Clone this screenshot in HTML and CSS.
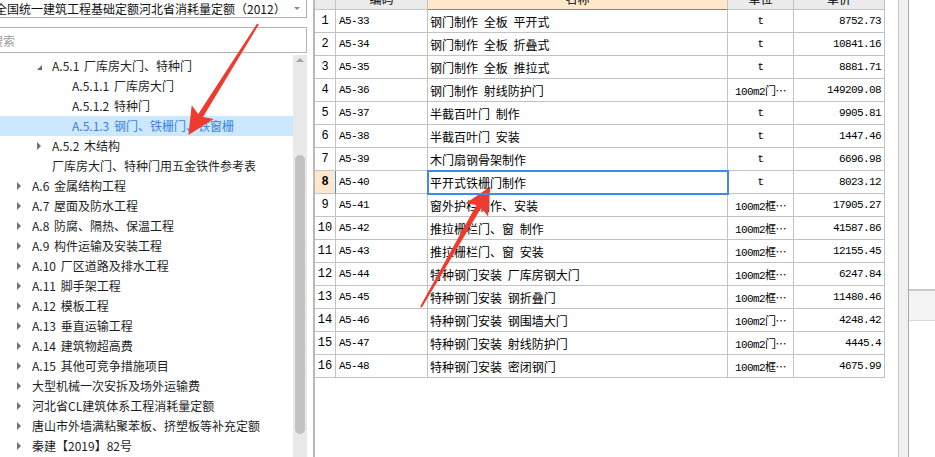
FILE: index.html
```html
<!DOCTYPE html>
<html lang="zh-CN">
<head>
    <meta charset="UTF-8">
    <meta name="viewport" content="width=device-width, initial-scale=1.0">
    <title>定额库</title>
    <link rel="stylesheet" href="styles.css">
</head>
<body>
    <div class="app">
        <aside class="lib">
            <div class="combo">
                <span class="combo-text">全国统一建筑工程基础定额河北省消耗量定额（2012）</span>
                <span class="caret"></span>
            </div>
            <input class="search" type="text" placeholder="搜索">
            <div class="tree">
                <ul class="nodes">
                    <li class="node lv2"><i class="tog open"></i>A.5.1 厂库房大门、特种门</li>
                    <li class="node lv3"><i class="tog"></i>A.5.1.1 厂库房大门</li>
                    <li class="node lv3"><i class="tog"></i>A.5.1.2 特种门</li>
                    <li class="node lv3 selected"><i class="tog"></i>A.5.1.3 钢门、铁栅门、铁窗栅</li>
                    <li class="node lv2"><i class="tog shut"></i>A.5.2 木结构</li>
                    <li class="node lv2"><i class="tog"></i>厂库房大门、特种门用五金铁件参考表</li>
                    <li class="node lv1"><i class="tog shut"></i>A.6 金属结构工程</li>
                    <li class="node lv1"><i class="tog shut"></i>A.7 屋面及防水工程</li>
                    <li class="node lv1"><i class="tog shut"></i>A.8 防腐、隔热、保温工程</li>
                    <li class="node lv1"><i class="tog shut"></i>A.9 构件运输及安装工程</li>
                    <li class="node lv1"><i class="tog shut"></i>A.10 厂区道路及排水工程</li>
                    <li class="node lv1"><i class="tog shut"></i>A.11 脚手架工程</li>
                    <li class="node lv1"><i class="tog shut"></i>A.12 模板工程</li>
                    <li class="node lv1"><i class="tog shut"></i>A.13 垂直运输工程</li>
                    <li class="node lv1"><i class="tog shut"></i>A.14 建筑物超高费</li>
                    <li class="node lv1"><i class="tog shut"></i>A.15 其他可竞争措施项目</li>
                    <li class="node lv1"><i class="tog shut"></i>大型机械一次安拆及场外运输费</li>
                    <li class="node lv1"><i class="tog shut"></i>河北省CL建筑体系工程消耗量定额</li>
                    <li class="node lv1"><i class="tog shut"></i>唐山市外墙满粘聚苯板、挤塑板等补充定额</li>
                    <li class="node lv1"><i class="tog shut"></i>秦建【2019】82号</li>
                </ul>
                <div class="vscroll">
                    <span class="up"></span>
                    <span class="thumb"></span>
                </div>
            </div>
        </aside>

        <main class="grid">
            <div class="sheet">
                <div class="hd"></div><div class="hd">编码</div><div class="hd hd-on">名称</div><div class="hd">单位</div><div class="hd">单价</div>

                <div class="no">1</div><div class="code">A5-33</div><div class="name">钢门制作 全板 平开式</div><div class="unit">t</div><div class="price">8752.73</div>
                <div class="no">2</div><div class="code">A5-34</div><div class="name">钢门制作 全板 折叠式</div><div class="unit">t</div><div class="price">10841.16</div>
                <div class="no">3</div><div class="code">A5-35</div><div class="name">钢门制作 全板 推拉式</div><div class="unit">t</div><div class="price">8881.71</div>
                <div class="no">4</div><div class="code">A5-36</div><div class="name">钢门制作 射线防护门</div><div class="unit">100m2门⋯</div><div class="price">149209.08</div>
                <div class="no">5</div><div class="code">A5-37</div><div class="name">半截百叶门 制作</div><div class="unit">t</div><div class="price">9905.81</div>
                <div class="no">6</div><div class="code">A5-38</div><div class="name">半截百叶门 安装</div><div class="unit">t</div><div class="price">1447.46</div>
                <div class="no">7</div><div class="code">A5-39</div><div class="name">木门扇钢骨架制作</div><div class="unit">t</div><div class="price">6696.98</div>
                <div class="no no-on">8</div><div class="code">A5-40</div><div class="name name-on">平开式铁栅门制作</div><div class="unit">t</div><div class="price">8023.12</div>
                <div class="no">9</div><div class="code">A5-41</div><div class="name">窗外护栏制作、安装</div><div class="unit">100m2框⋯</div><div class="price">17905.27</div>
                <div class="no">10</div><div class="code">A5-42</div><div class="name">推拉栅栏门、窗 制作</div><div class="unit">100m2框⋯</div><div class="price">41587.86</div>
                <div class="no">11</div><div class="code">A5-43</div><div class="name">推拉栅栏门、窗 安装</div><div class="unit">100m2框⋯</div><div class="price">12155.45</div>
                <div class="no">12</div><div class="code">A5-44</div><div class="name">特种钢门安装 厂库房钢大门</div><div class="unit">100m2框⋯</div><div class="price">6247.84</div>
                <div class="no">13</div><div class="code">A5-45</div><div class="name">特种钢门安装 钢折叠门</div><div class="unit">100m2框⋯</div><div class="price">11480.46</div>
                <div class="no">14</div><div class="code">A5-46</div><div class="name">特种钢门安装 钢围墙大门</div><div class="unit">100m2门⋯</div><div class="price">4248.42</div>
                <div class="no">15</div><div class="code">A5-47</div><div class="name">特种钢门安装 射线防护门</div><div class="unit">100m2门⋯</div><div class="price">4445.4</div>
                <div class="no">16</div><div class="code">A5-48</div><div class="name">特种钢门安装 密闭钢门</div><div class="unit">100m2框⋯</div><div class="price">4675.99</div>
            </div>
        </main>

        <div class="splitter"></div>

        <div class="side">
            <div class="side-bar"></div>
        </div>
    </div>

    <!-- red annotation arrows drawn over the screenshot -->
    <svg class="marks" width="935" height="457" viewBox="0 0 935 457">
        <polygon points="0,-1 108,-2.8 104,-13 131,0 104,13 108,2.8 0,1" transform="translate(258 24) rotate(122.1)"/>
        <polygon points="0,-1 116,-2.8 112,-13 139,0 112,13 116,2.8 0,1" transform="translate(421 307) rotate(-60.1)"/>
    </svg>
</body>
</html>
```

FILE: styles.css
```css
* {
    margin: 0;
    padding: 0;
    box-sizing: border-box;
}

body {
    width: 935px;
    height: 457px;
    overflow: hidden;
    position: relative;
    background: #fff;
    font-family: "Noto Sans CJK SC", sans-serif;
    font-size: 12px;
    color: #1e1e1e;
}

.app {
    display: flex;
    height: 457px;
}

/* left: library tree */
.lib {
    flex: none;
    width: 321px;
    margin-left: -14px;
    display: flex;
    flex-direction: column;
}

.combo {
    margin-top: -2px;
    height: 20px;
    border: 1px solid #adadad;
    display: flex;
    align-items: center;
    padding-left: 8px;
    white-space: nowrap;
    overflow: hidden;
    color: #111;
}

.caret {
    margin-left: auto;
    margin-right: 6px;
    border-top: 3px solid #8a8a8a;
    border-left: 3px solid transparent;
    border-right: 3px solid transparent;
}

.search {
    margin-top: 9px;
    height: 26px;
    border: 1px solid #b4b4b4;
    padding-left: 4px;
    font-family: "Noto Sans CJK SC", sans-serif;
    font-size: 12px;
    outline: none;
}

.search::placeholder {
    color: #9c9c9c;
}

.tree {
    flex: 1;
    margin-top: 2px;
    display: flex;
    overflow: hidden;
}

.nodes {
    flex: 1;
    list-style: none;
    padding-top: 1px;
}

.node {
    height: 20px;
    line-height: 20px;
    display: flex;
    align-items: center;
    white-space: nowrap;
    word-spacing: 2px;
}

.lv1 { padding-left: 30px; }
.lv2 { padding-left: 50px; }
.lv3 { padding-left: 70px; }

.node.selected {
    background: #cce8ff;
    color: #3a7fdc;
}

.tog {
    flex: none;
    width: 16px;
    height: 20px;
    display: flex;
    align-items: center;
}

.tog.shut::before {
    content: "";
    margin-left: 1px;
    border-left: 4px solid #707070;
    border-top: 4px solid transparent;
    border-bottom: 4px solid transparent;
}

.tog.open::before {
    content: "";
    margin-left: 1px;
    margin-top: 3px;
    border-bottom: 5px solid #6a6a6a;
    border-left: 5px solid transparent;
}

.vscroll {
    flex: none;
    width: 14px;
    background: #e8e8e8;
    display: flex;
    flex-direction: column;
    align-items: center;
}

.up {
    margin-top: 3px;
    border-bottom: 4px solid #a4a4a4;
    border-left: 4px solid transparent;
    border-right: 4px solid transparent;
}

.thumb {
    margin-top: 93px;
    width: 10px;
    height: 279px;
    border-radius: 5px;
    background: #c2c2c2;
}

/* middle: quota list */
.grid {
    flex: none;
    width: 585px;
    margin-left: 6px;
    border-left: 2px solid #b9b9b9;
    overflow: hidden;
}

.sheet {
    display: grid;
    grid-template-columns: 21px 92px 300px 66px 91px;
    grid-auto-rows: 23px;
    width: 570px;
    margin-top: -13px;
}

.sheet > div {
    display: flex;
    align-items: center;
    white-space: nowrap;
    overflow: hidden;
    border-right: 1px solid #c3c3c3;
    border-bottom: 1px solid #c3c3c3;
    color: #000;
}

.sheet > .hd {
    justify-content: center;
    background: #ebebeb;
}

.sheet > .hd-on {
    background: #fde8cc;
    border-bottom-color: #4a90e2;
}

.no {
    justify-content: center;
    font-family: "Liberation Mono", monospace;
    font-size: 12px;
}

.sheet > .no-on {
    background: #fde8cc;
    font-weight: bold;
    border-right-color: #3e8ce4;
}

.code {
    padding-left: 3px;
    font-family: "Liberation Mono", "Noto Sans CJK SC", monospace;
    font-size: 11px;
    letter-spacing: -0.6px;
}

.name {
    padding-left: 2px;
    word-spacing: 3px;
}

.name-on {
    position: relative;
    z-index: 1;
    outline: 2px solid #3e8ce4;
    outline-offset: -1px;
}

.unit {
    justify-content: center;
    font-family: "Liberation Mono", "Noto Sans CJK SC", monospace;
    font-size: 11px;
    letter-spacing: -0.6px;
}

.price {
    justify-content: flex-end;
    padding-right: 3px;
    font-family: "Liberation Mono", monospace;
    font-size: 11px;
    letter-spacing: -0.6px;
}

/* right: splitter and property pane */
.splitter {
    flex: none;
    width: 11px;
    background: #f0f0f0;
    border-left: 1px solid #c6c6c6;
    border-right: 1px solid #a9a9a9;
}

.side {
    flex: 1;
}

.side-bar {
    margin-top: 289px;
    height: 32px;
    background: #f3f3f3;
    border-top: 2px solid #c8c8c8;
    border-bottom: 1px solid #dadada;
}

.marks {
    position: absolute;
    top: 0;
    left: 0;
    pointer-events: none;
    fill: #ef3a2e;
}
```
